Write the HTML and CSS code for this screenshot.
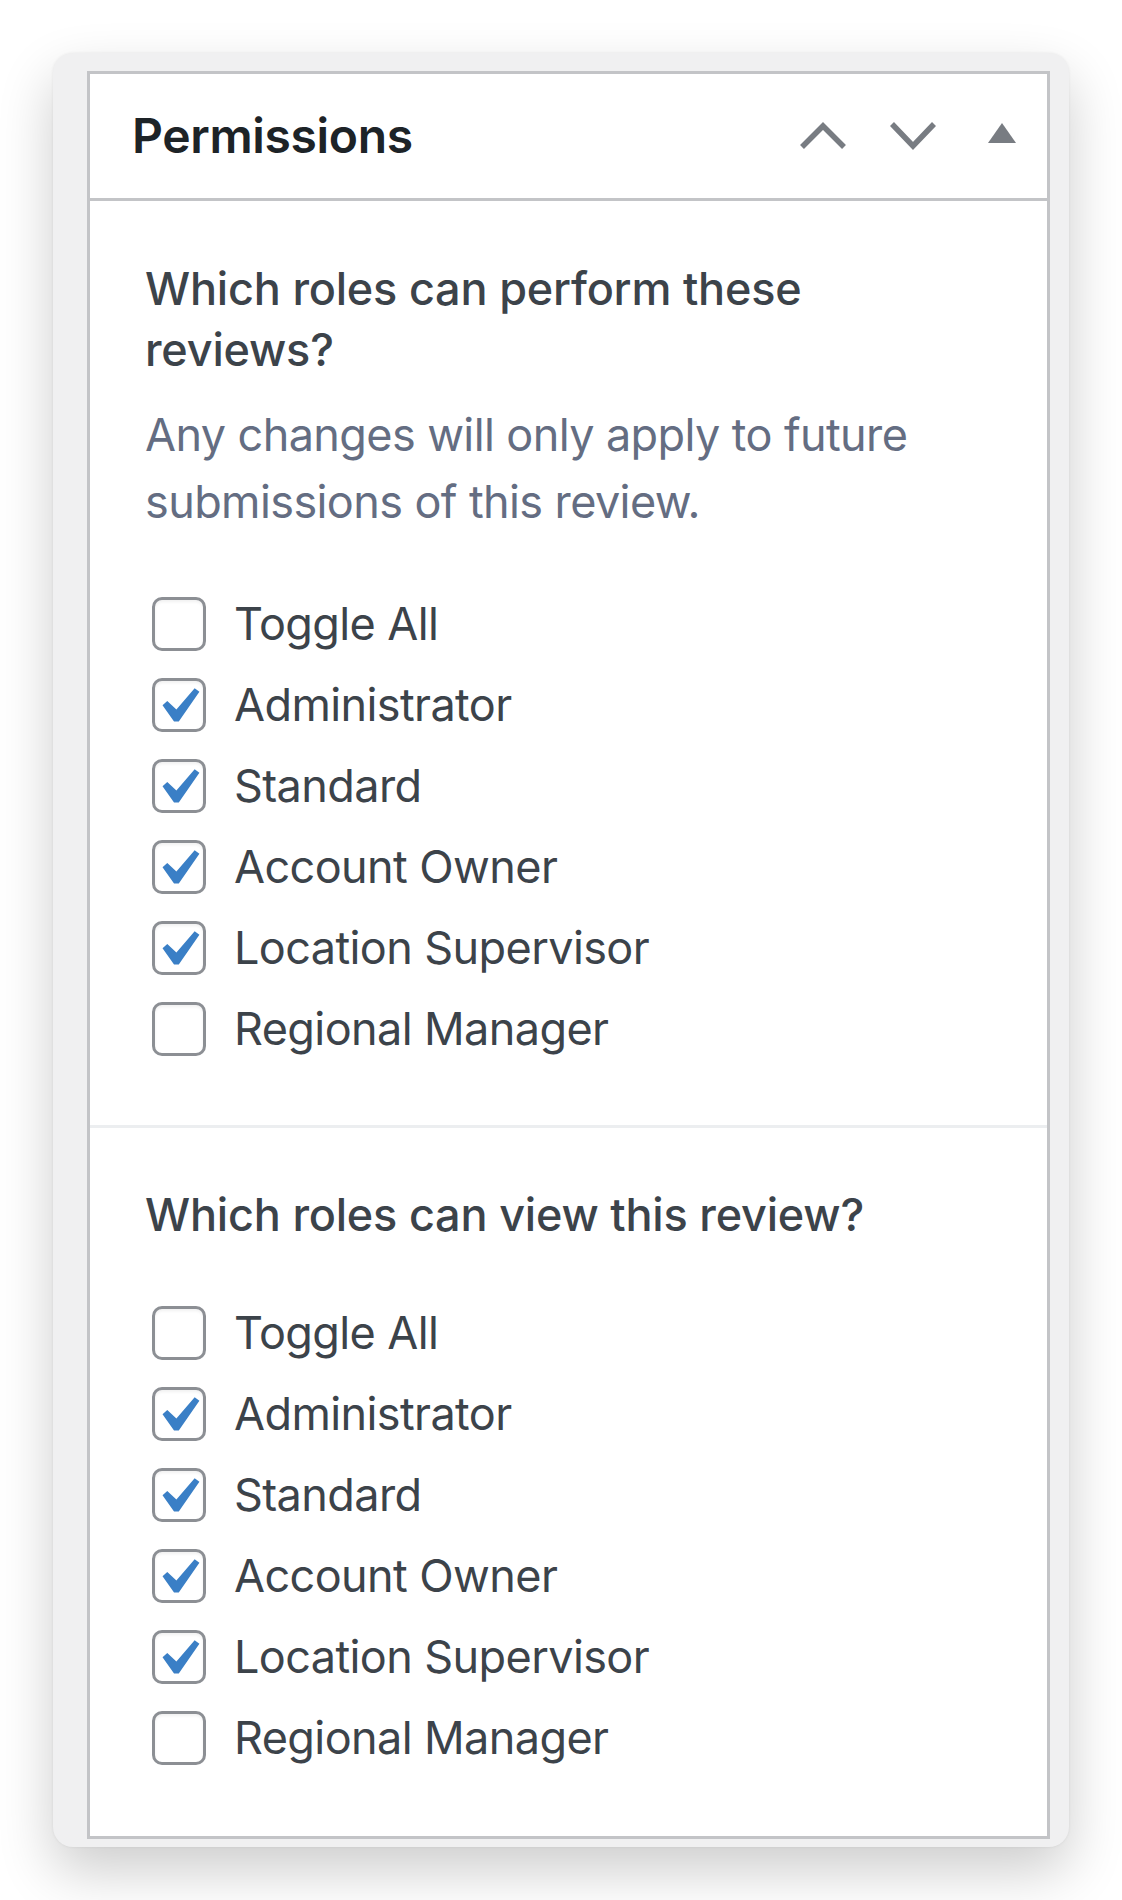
FILE: index.html
```html
<!DOCTYPE html>
<html lang="en">
<head>
<meta charset="utf-8">
<title>Permissions</title>
<link rel="stylesheet" href="styles.css">
</head>
<body>
<div class="window">
  <div class="postbox">
    <div class="postbox-header">
      <h2 class="postbox-title">Permissions</h2>
      <div class="handle-actions">
        <button class="handle-btn" aria-label="Move up">
          <svg class="chev" width="48" height="28" viewBox="0 0 48 28"><polyline points="3,25 24,4 45,25" fill="none" stroke="#787c82" stroke-width="5.5" stroke-linejoin="miter"/></svg>
        </button>
        <button class="handle-btn" aria-label="Move down">
          <svg class="chev" width="48" height="30" viewBox="0 0 48 30"><polyline points="3,3 24,25 45,3" fill="none" stroke="#787c82" stroke-width="5.5" stroke-linejoin="miter"/></svg>
        </button>
        <button class="handle-btn" aria-label="Toggle panel">
          <svg class="tri" width="28" height="20" viewBox="0 0 28 20"><polygon points="14,0 28,20 0,20" fill="#787c82"/></svg>
        </button>
      </div>
    </div>

    <div class="section">
      <h3 class="question">Which roles can perform these reviews?</h3>
      <p class="description">Any changes will only apply to future submissions of this review.</p>
      <ul class="role-list">
        <li class="role"><span class="box"></span><span class="label">Toggle All</span></li>
        <li class="role"><span class="box checked"><svg class="check" viewBox="0 0 20 20"><path d="M14.83 4.89l1.34.94-5.81 8.38H9.02L5.78 9.67l1.34-1.25 2.57 2.4z" fill="#3a7fc6"/></svg></span><span class="label">Administrator</span></li>
        <li class="role"><span class="box checked"><svg class="check" viewBox="0 0 20 20"><path d="M14.83 4.89l1.34.94-5.81 8.38H9.02L5.78 9.67l1.34-1.25 2.57 2.4z" fill="#3a7fc6"/></svg></span><span class="label">Standard</span></li>
        <li class="role"><span class="box checked"><svg class="check" viewBox="0 0 20 20"><path d="M14.83 4.89l1.34.94-5.81 8.38H9.02L5.78 9.67l1.34-1.25 2.57 2.4z" fill="#3a7fc6"/></svg></span><span class="label">Account Owner</span></li>
        <li class="role"><span class="box checked"><svg class="check" viewBox="0 0 20 20"><path d="M14.83 4.89l1.34.94-5.81 8.38H9.02L5.78 9.67l1.34-1.25 2.57 2.4z" fill="#3a7fc6"/></svg></span><span class="label">Location Supervisor</span></li>
        <li class="role"><span class="box"></span><span class="label">Regional Manager</span></li>
      </ul>
    </div>

    <div class="section section-last">
      <h3 class="question">Which roles can view this review?</h3>
      <ul class="role-list">
        <li class="role"><span class="box"></span><span class="label">Toggle All</span></li>
        <li class="role"><span class="box checked"><svg class="check" viewBox="0 0 20 20"><path d="M14.83 4.89l1.34.94-5.81 8.38H9.02L5.78 9.67l1.34-1.25 2.57 2.4z" fill="#3a7fc6"/></svg></span><span class="label">Administrator</span></li>
        <li class="role"><span class="box checked"><svg class="check" viewBox="0 0 20 20"><path d="M14.83 4.89l1.34.94-5.81 8.38H9.02L5.78 9.67l1.34-1.25 2.57 2.4z" fill="#3a7fc6"/></svg></span><span class="label">Standard</span></li>
        <li class="role"><span class="box checked"><svg class="check" viewBox="0 0 20 20"><path d="M14.83 4.89l1.34.94-5.81 8.38H9.02L5.78 9.67l1.34-1.25 2.57 2.4z" fill="#3a7fc6"/></svg></span><span class="label">Account Owner</span></li>
        <li class="role"><span class="box checked"><svg class="check" viewBox="0 0 20 20"><path d="M14.83 4.89l1.34.94-5.81 8.38H9.02L5.78 9.67l1.34-1.25 2.57 2.4z" fill="#3a7fc6"/></svg></span><span class="label">Location Supervisor</span></li>
        <li class="role"><span class="box"></span><span class="label">Regional Manager</span></li>
      </ul>
    </div>
  </div>
</div>
</body>
</html>
```

FILE: styles.css
```css
* { box-sizing: border-box; }

html, body {
  margin: 0;
  padding: 0;
  background: #ffffff;
}

body {
  font-family: Inter, "Noto Sans", "Liberation Sans", sans-serif;
  padding: 53px 0 60px 53px;
}

.window {
  width: 1016px;
  background: #f0f0f1;
  border-radius: 20px;
  padding: 18px 19px 8px 34px;
  box-shadow: 0 24px 55px rgba(0, 0, 0, 0.2), 0 0 3px rgba(0, 0, 0, 0.07);
}

.postbox {
  background: #ffffff;
  border: 3px solid #c3c4c7;
}

.postbox-header {
  display: flex;
  align-items: center;
  height: 127px;
  border-bottom: 3px solid #c3c4c7;
}

.postbox-title {
  flex: 1;
  margin: 0;
  padding-left: 42px;
  font-size: 48px;
  font-weight: 600;
  line-height: 60px;
  color: #1d2327;
  letter-spacing: -0.35px;
}

.handle-actions {
  display: flex;
  height: 100%;
}

.handle-btn {
  display: flex;
  align-items: center;
  justify-content: center;
  width: 89.5px;
  height: 100%;
  padding: 0;
  border: 0;
  background: transparent;
}

.handle-btn .chev { display: block; }
.handle-btn .tri { display: block; margin-top: -6px; }

.section {
  padding: 57px 56px 56px 55px;
  border-bottom: 3px solid #eceef0;
}

.section-last {
  padding-top: 56px;
  padding-bottom: 58px;
  border-bottom: 0;
}

.section-last .role-list {
  margin-top: 47px;
}

.question {
  margin: 0;
  max-width: 800px;
  font-size: 45px;
  font-weight: 500;
  line-height: 61px;
  color: #3c434a;
  letter-spacing: -0.2px;
}

.description {
  margin: 21px 0 0;
  max-width: 800px;
  font-size: 45px;
  font-weight: 400;
  line-height: 67px;
  color: #646d82;
  letter-spacing: -0.6px;
}

.role-list {
  list-style: none;
  margin: 48px 0 0;
  padding: 0;
}

.role {
  display: flex;
  align-items: center;
  height: 81px;
  padding-left: 7px;
}

.box {
  position: relative;
  flex: none;
  width: 54px;
  height: 54px;
  border: 3px solid #8c8f94;
  border-radius: 10px;
  background: #ffffff;
  box-shadow: inset 0 2px 3px rgba(0, 0, 0, 0.06);
}

.check {
  position: absolute;
  left: -13px;
  top: -10px;
  width: 71px;
  height: 71px;
}

.label {
  margin-left: 28px;
  font-size: 45px;
  font-weight: 400;
  line-height: 60px;
  color: #3c434a;
  letter-spacing: -0.6px;
}
```
